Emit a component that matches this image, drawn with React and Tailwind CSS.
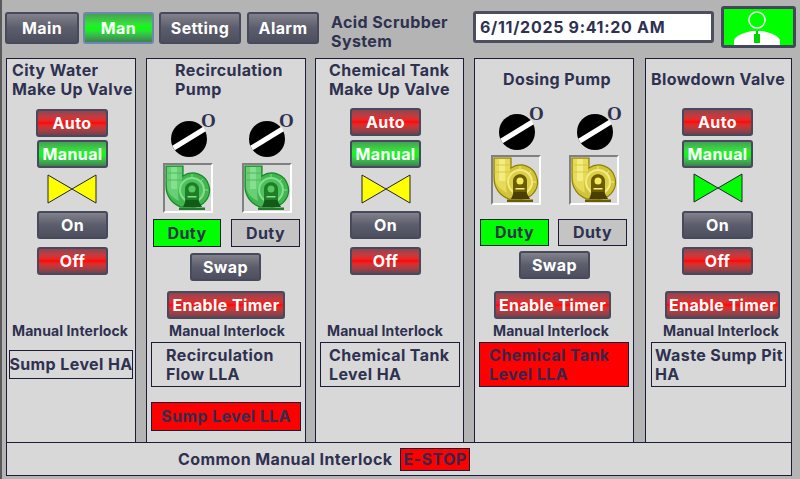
import React from "react";

const F = "font-['Inter','Noto_Sans',sans-serif]";
const T = "text-[#2e3150] font-bold tracking-[0.4px]";

function Btn({ kind = "gray", cls = "", children }) {
  const bg =
    kind === "red"
      ? "bg-linear-to-b from-[#8c4452] via-[#ff0000] to-[#70404e]"
      : kind === "green"
      ? "bg-linear-to-b from-[#45a052] via-[#00ff00] to-[#3c8050]"
      : "bg-linear-to-b from-[#82828c] via-[#5c5d6c] to-[#4e4f5e]";
  return (
    <div className={`${bg} ${cls} shrink-0 flex items-center justify-center rounded-[3px] border-2 border-[#47495c] text-white font-bold text-[16px] leading-[19px] tracking-[0.4px]`}>
      {children}
    </div>
  );
}

function Valve({ color, cls }) {
  return (
    <svg width="50" height="30" viewBox="0 0 50 30" className={`shrink-0 ${cls}`}>
      <polygon points="1,1 25,15 1,29" fill={color} stroke="#20223a" strokeWidth="1" />
      <polygon points="49,1 25,15 49,29" fill={color} stroke="#20223a" strokeWidth="1" />
    </svg>
  );
}

function Dial({ cls }) {
  return (
    <div className={`relative shrink-0 w-[46px] h-[36px] ${cls}`}>
      <svg width="36" height="36" viewBox="0 0 36 36">
        <circle cx="18" cy="18" r="18" fill="#000" />
        <line x1="2.5" y1="27" x2="33.5" y2="8" stroke="#fff" strokeWidth="5" />
      </svg>
      <span className="absolute left-[30px] top-[-10px] font-['Liberation_Serif',serif] text-[#2e3150] font-bold text-[19px] leading-[20px]">O</span>
    </div>
  );
}

function Pump({ yellow, cls }) {
  const c = yellow
    ? { line: "#8f8000", light: "#f4ec80", pipe: "#e6da58", mid: "#dccf48", deep: "#d2c33c", dark: "#6b5c00", darker: "#4a3f00", eye: "#f5e85a" }
    : { line: "#128a20", light: "#86de90", pipe: "#68cf74", mid: "#4cc25a", deep: "#42b551", dark: "#1f7d27", darker: "#125a18", eye: "#55c860" };
  return (
    <div className={`shrink-0 w-[50px] h-[50px] border-2 border-t-[#808080] border-l-[#808080] border-r-white border-b-white ${cls}`}>
      <svg width="46" height="46" viewBox="0 0 46 46" className="block">
        <path d="M1 1 H18 V11 A17 17 0 1 1 26 42 H16 C7 39 1 31 1 21 Z" fill={c.deep} stroke={c.line} strokeWidth="1.2" />
        <path d="M2 2 H17 V16 C14 20 12 26 14 36 C6 32 2 27 2 20 Z" fill={c.pipe} />
        <path d="M6 2 H12 V24 H6 Z" fill={c.light} />
        <path d="M1 8 H18 M1 15 H18" stroke={c.deep} strokeWidth="0.8" />
        <circle cx="27" cy="25" r="12" fill={c.mid} stroke={c.light} strokeWidth="2" />
        <path d="M27 9 V12 M38 14 L36 16 M43 25 H40" stroke={c.light} strokeWidth="1" />
        <path d="M20 42 V24 C20 15 34 15 34 24 V42 Z" fill={c.dark} />
        <circle cx="27" cy="24" r="3.5" fill={c.eye} />
        <rect x="22.5" y="31" width="9" height="1.5" fill={c.light} />
        <path d="M18 42 L21 35 H33 L37 42 Z" fill={c.darker} />
        <rect x="14" y="42.5" width="26" height="2.5" fill={c.dark} />
      </svg>
    </div>
  );
}

function Box({ red, cls, children }) {
  return (
    <div className={`${cls} shrink-0 border border-[#1a1c38] ${red ? "bg-[#ff0000]" : ""} ${T} text-[16px] leading-[19px] flex items-center`}>
      {children}
    </div>
  );
}

const Title = ({ cls, children }) => <div className={`${cls} ${T} text-[16px] leading-[19px] shrink-0`}>{children}</div>;
const MI = ({ cls }) => <div className={`${cls} text-[#2e3150] font-bold tracking-[0.1px] text-[14px] leading-[16px] whitespace-nowrap shrink-0`}>Manual Interlock</div>;

function Panel({ cls, children }) {
  return <div className={`${cls} shrink-0 h-[385px] border border-[#1a1c38] bg-[#d8d8d8] flex flex-col items-start`}>{children}</div>;
}

export default function App() {
  return (
    <div className={`${F} w-[800px] h-[479px] bg-[#b4b4b4] border-l-2 border-[#5a5a5a] overflow-hidden flex flex-col`}>
      <div className="h-[58px] shrink-0 flex items-start pl-[3px]">
        <Btn cls="w-[74px] h-[32px] mt-[12px]">Main</Btn>
        <Btn kind="green" cls="w-[71px] h-[32px] mt-[12px] ml-[4px] !border-[#6f86ae]">Man</Btn>
        <Btn cls="w-[82px] h-[32px] mt-[12px] ml-[5px]">Setting</Btn>
        <Btn cls="w-[72px] h-[32px] mt-[12px] ml-[6px]">Alarm</Btn>
        <div className={`${T} text-[16px] leading-[19px] w-[130px] ml-[12px] mt-[13px]`}>Acid Scrubber System</div>
        <div className={`w-[241px] h-[32px] mt-[11px] ml-[12px] border-[3px] border-[#4d4e60] rounded-[3px] bg-white flex items-center pl-[4px] text-[#2e3150] font-bold text-[16px] leading-[19px] tracking-[0.7px]`}>6/11/2025 9:41:20 AM</div>
        <div className="w-[75px] h-[42px] mt-[6px] ml-[7px] border-[3px] border-[#44465a] rounded-[3px] bg-[#00ff00] flex items-end justify-center pr-[3px]">
          <svg width="46" height="35" viewBox="0 0 46 35" className="block">
            <circle cx="23" cy="10" r="8" fill="none" stroke="#fff" strokeWidth="1.5" />
            <path d="M0 35 V30 C2 25 12 22 18 21 H28 C34 22 44 25 46 30 V35 Z" fill="#fff" />
            <path d="M22 21 H24 V24 H26 V33 H20 V24 H22 Z" fill="#00d400" />
          </svg>
        </div>
      </div>

      <div className="flex items-start pl-[4px] shrink-0">
        <Panel cls="w-[130px]">
          <Title cls="ml-[5px] mt-[2px] whitespace-nowrap">City Water<br />Make Up Valve</Title>
          <Btn kind="red" cls="w-[72px] h-[28px] ml-[29px] mt-[10px]">Auto</Btn>
          <Btn kind="green" cls="w-[71px] h-[28px] ml-[30px] mt-[3px]">Manual</Btn>
          <Valve color="#ffff00" cls="ml-[40px] mt-[6px]" />
          <Btn cls="w-[71px] h-[28px] ml-[30px] mt-[7px]">On</Btn>
          <Btn kind="red" cls="w-[71px] h-[28px] ml-[30px] mt-[8px]">Off</Btn>
          <MI cls="ml-[5px] mt-[48px]" />
          <Box cls="w-[124px] h-[29px] ml-[2px] mt-[11px] whitespace-nowrap justify-center">Sump Level HA</Box>
        </Panel>

        <Panel cls="w-[160px] ml-[10px]">
          <Title cls="ml-[28px] mt-[2px]">Recirculation<br />Pump</Title>
          <div className="flex mt-[22px] ml-[24px]">
            <Dial />
            <Dial cls="ml-[32px]" />
          </div>
          <div className="flex mt-[6px] ml-[16px]">
            <Pump />
            <Pump cls="ml-[29px]" />
          </div>
          <div className="flex mt-[6px] ml-[6px]">
            <Box cls="w-[68px] h-[28px] bg-[#00ff00] justify-center">Duty</Box>
            <Box cls="w-[69px] h-[28px] ml-[10px] bg-[#c4c4c4] justify-center">Duty</Box>
          </div>
          <Btn cls="w-[71px] h-[28px] ml-[43px] mt-[6px]">Swap</Btn>
          <Btn kind="red" cls="w-[118px] h-[28px] ml-[20px] mt-[10px] whitespace-nowrap">Enable Timer</Btn>
          <MI cls="ml-[22px] mt-[4px]" />
          <Box cls="w-[150px] h-[45px] ml-[4px] mt-[3px] pl-[14px]"><span>Recirculation<br />Flow LLA</span></Box>
          <Box red cls="w-[150px] h-[29px] ml-[4px] mt-[15px] justify-center">Sump Level LLA</Box>
        </Panel>

        <Panel cls="w-[149px] ml-[9px]">
          <Title cls="ml-[13px] mt-[2px] whitespace-nowrap">Chemical Tank<br />Make Up Valve</Title>
          <Btn kind="red" cls="w-[71px] h-[28px] ml-[34px] mt-[9px]">Auto</Btn>
          <Btn kind="green" cls="w-[71px] h-[28px] ml-[34px] mt-[4px]">Manual</Btn>
          <Valve color="#ffff00" cls="ml-[45px] mt-[6px]" />
          <Btn cls="w-[71px] h-[28px] ml-[34px] mt-[7px]">On</Btn>
          <Btn kind="red" cls="w-[71px] h-[28px] ml-[34px] mt-[8px]">Off</Btn>
          <MI cls="ml-[11px] mt-[48px]" />
          <Box cls="w-[140px] h-[45px] ml-[4px] mt-[3px] pl-[8px]"><span>Chemical Tank<br />Level HA</span></Box>
        </Panel>

        <Panel cls="w-[160px] ml-[10px]">
          <Title cls="ml-[28px] mt-[11px] whitespace-nowrap">Dosing Pump</Title>
          <div className="flex mt-[25px] ml-[24px]">
            <Dial />
            <Dial cls="ml-[32px]" />
          </div>
          <div className="flex mt-[5px] ml-[16px]">
            <Pump yellow />
            <Pump yellow cls="ml-[28px]" />
          </div>
          <div className="flex mt-[14px] ml-[5px]">
            <Box cls="w-[69px] h-[27px] bg-[#00ff00] justify-center">Duty</Box>
            <Box cls="w-[69px] h-[27px] ml-[9px] bg-[#c4c4c4] justify-center">Duty</Box>
          </div>
          <Btn cls="w-[71px] h-[28px] ml-[44px] mt-[5px]">Swap</Btn>
          <Btn kind="red" cls="w-[117px] h-[28px] ml-[19px] mt-[12px] whitespace-nowrap">Enable Timer</Btn>
          <MI cls="ml-[18px] mt-[4px]" />
          <Box red cls="w-[150px] h-[45px] ml-[4px] mt-[3px] pl-[9px] !text-[#34284c]"><span>Chemical Tank<br />Level LLA</span></Box>
        </Panel>

        <Panel cls="w-[147px] ml-[11px]">
          <Title cls="ml-[5px] mt-[11px] whitespace-nowrap">Blowdown Valve</Title>
          <Btn kind="red" cls="w-[71px] h-[28px] ml-[36px] mt-[19px]">Auto</Btn>
          <Btn kind="green" cls="w-[71px] h-[28px] ml-[36px] mt-[4px]">Manual</Btn>
          <Valve color="#00ff00" cls="ml-[47px] mt-[5px]" />
          <Btn cls="w-[71px] h-[28px] ml-[36px] mt-[8px]">On</Btn>
          <Btn kind="red" cls="w-[71px] h-[28px] ml-[36px] mt-[8px]">Off</Btn>
          <Btn kind="red" cls="w-[115px] h-[28px] ml-[19px] mt-[16px] whitespace-nowrap">Enable Timer</Btn>
          <MI cls="ml-[17px] mt-[4px]" />
          <Box cls="w-[135px] h-[45px] ml-[5px] mt-[3px] pl-[3px]"><span>Waste Sump Pit<br />HA</span></Box>
        </Panel>
      </div>

      <div className="ml-[4px] -mt-px w-[786px] h-[34px] shrink-0 border border-[#1a1c38] bg-[#d8d8d8] flex items-center pl-[171px]">
        <span className={`${T} text-[16px] leading-[19px] whitespace-nowrap`}>Common Manual Interlock</span>
        <Box red cls="w-[70px] h-[23px] ml-[8px] pl-[2px] !text-[#34284c]">E-STOP</Box>
      </div>
    </div>
  );
}
